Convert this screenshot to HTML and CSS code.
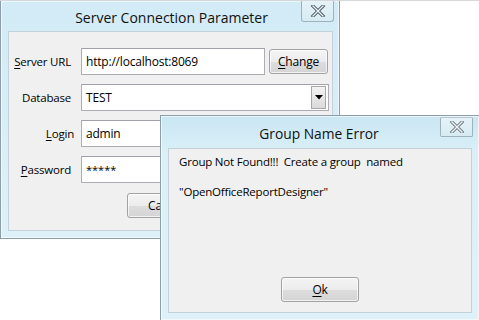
FILE: index.html
```html
<!DOCTYPE html>
<html>
<head>
<meta charset="utf-8">
<link rel="stylesheet" href="styles.css">
</head>
<body>
<div class="desk">
  <div class="win win-main">
    <div class="titlebar">
      <span class="title">Server Connection Parameter</span>
      <span class="close"><svg width="16" height="12" viewBox="0 0 16 12"><path d="M3 1 L13 11 M13 1 L3 11" stroke="#4a5560" stroke-width="3.2" stroke-linecap="square"/><path d="M3 1 L13 11 M13 1 L3 11" stroke="#e8f2f7" stroke-width="1.4" stroke-linecap="square"/></svg></span>
    </div>
    <div class="client">
      <div class="row">
        <span class="label"><u>S</u>erver URL</span>
        <span class="field field-url">http://localhost:8069</span>
        <span class="btn btn-change"><u>C</u>hange</span>
      </div>
      <div class="row">
        <span class="label">Database</span>
        <span class="field combo">TEST<span class="drop"><svg width="8" height="5" viewBox="0 0 8 5"><path d="M0 0 H8 L4 4.5 Z" fill="#000"/></svg></span></span>
      </div>
      <div class="row">
        <span class="label label-login"><u>L</u>ogin</span>
        <span class="field">admin</span>
      </div>
      <div class="row">
        <span class="label"><u>P</u>assword</span>
        <span class="field pw">*****</span>
      </div>
      <div class="actions">
        <span class="btn btn-cancel">Cancel</span>
      </div>
    </div>
  </div>

  <div class="win win-err">
    <div class="titlebar">
      <span class="title">Group Name Error</span>
      <span class="close"><svg width="16" height="12" viewBox="0 0 16 12"><path d="M3 1 L13 11 M13 1 L3 11" stroke="#6c7880" stroke-width="3.2" stroke-linecap="square"/><path d="M3 1 L13 11 M13 1 L3 11" stroke="#f3f7f9" stroke-width="1.4" stroke-linecap="square"/></svg></span>
    </div>
    <div class="client client-err">
      <p class="msg">Group Not Found!!!&nbsp; Create a group&nbsp; named</p>
      <p class="msg">"OpenOfficeReportDesigner"</p>
      <div class="err-actions">
        <span class="btn btn-ok"><u>O</u>k</span>
      </div>
    </div>
  </div>
</div>
</body>
</html>
```

FILE: styles.css
```css
html, body {
  margin: 0;
  padding: 0;
  background: #ffffff;
}
body {
  font-family: "Open Sans", "Noto Sans", sans-serif;
  font-size: 12px;
  color: #000;
}
.desk {
  position: relative;
  width: 479px;
  height: 320px;
  overflow: hidden;
  border-top: 1px solid #d4d8da;
  box-sizing: border-box;
}
.win {
  position: absolute;
  box-sizing: border-box;
  display: flex;
  flex-direction: column;
  border: 1px solid #8e9ea8;
  background: linear-gradient(#d2ebf6, #dff1f8);
  box-shadow: 0 0 0 1px rgba(255,255,255,0.6) inset;
}
.win-main {
  left: 0;
  top: -1px;
  width: 340px;
  height: 239px;
  padding: 0 6px 7px 7px;
}
.win-err {
  left: 160px;
  top: 114px;
  width: 320px;
  height: 206px;
  padding: 0 7px 7px 7px;
  background: linear-gradient(#c9e7f3, #dcf0f8 40px, #dff1f8);
}
.titlebar {
  position: relative;
  display: flex;
  align-items: center;
  justify-content: center;
  flex: none;
}
.win-main .titlebar { height: 30px; }
.win-err .titlebar { height: 32px; }
.title {
  font-size: 14px;
  color: #111;
}
.win-main .title { margin-top: 2px; margin-left: 2px; }
.win-err .title { margin-top: 2px; margin-left: -2px; font-size: 13.8px; }
.close {
  position: absolute;
  top: 0;
  right: 0;
  display: flex;
  align-items: center;
  justify-content: center;
  box-sizing: border-box;
  width: 33px;
  height: 21px;
  border: 1px solid #9fb2bc;
  border-top: none;
  border-radius: 0 0 3px 3px;
  background: linear-gradient(#e6f3f8, #d7ebf3);
}
.win-main .close { right: -1px; }
.win-err .close { right: -1px; height: 20px; top: 1px; border-top: 1px solid #b6c7cf; border-radius: 2px; }
.client {
  flex: 1;
  background: #f0f0f0;
  border: 1px solid #c3d2d9;
  box-sizing: border-box;
  display: flex;
  flex-direction: column;
}
.win-main .client {
  padding: 16px 4px 0 0;
  gap: 9px;
}
.row {
  display: flex;
  align-items: center;
  height: 27px;
}
.label {
  width: 62px;
  text-align: right;
  margin-right: 10px;
  flex: none;
  white-space: nowrap;
  font-size: 11.5px;
  letter-spacing: -0.2px;
}
.label-login { width: 65px; margin-right: 7px; }
.field {
  box-sizing: border-box;
  height: 27px;
  width: 248px;
  background: #fff;
  border: 1px solid #abadb3;
  border-top-color: #a0a3aa;
  display: flex;
  align-items: center;
  padding-left: 4px;
  font-size: 12px;
  letter-spacing: -0.2px;
  flex: none;
}
.field-url { width: 184px; }
.pw { letter-spacing: 0; font-size: 11px; }
.combo { position: relative; }
.drop {
  position: absolute;
  right: 2px;
  top: 1px;
  bottom: 1px;
  width: 15px;
  box-sizing: border-box;
  border: 1px solid #a9a9a9;
  background: linear-gradient(#f3f3f3, #dadada);
  display: flex;
  align-items: center;
  justify-content: center;
}
.btn {
  box-sizing: border-box;
  height: 25px;
  display: inline-flex;
  align-items: center;
  justify-content: center;
  border: 1px solid #a2a2a2;
  border-radius: 3px;
  background: linear-gradient(#f4f4f4 0%, #ececec 50%, #dddddd 51%, #d4d4d4 100%);
  box-shadow: 0 0 0 1px rgba(255,255,255,0.7) inset;
  font-size: 12px;
  letter-spacing: -0.2px;
  flex: none;
}
.btn-change { width: 59px; margin-left: 4px; }
.actions {
  display: flex;
  padding-left: 118px;
  margin-top: 1px;
}
.btn-cancel { width: 78px; }
.client-err {
  padding: 5px 10px 10px 10px;
}
.msg {
  margin: 0;
  font-size: 11.5px;
  line-height: 16px;
  letter-spacing: -0.2px;
}
.msg + .msg { margin-top: 14px; }
.err-actions {
  margin-top: auto;
  display: flex;
  justify-content: center;
}
.btn-ok { width: 78px; }
u { text-decoration-thickness: 1px; text-underline-offset: 2px; }
```
